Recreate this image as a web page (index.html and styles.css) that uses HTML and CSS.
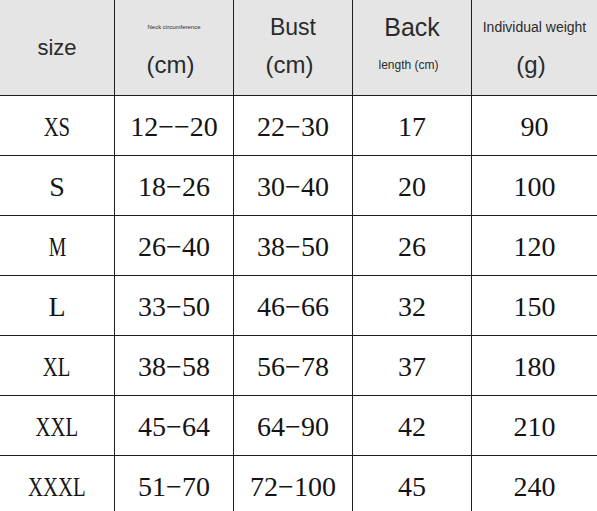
FILE: index.html
```html
<!DOCTYPE html>
<html>
<head>
<meta charset="utf-8">
<link rel="stylesheet" href="styles.css">
</head>
<body>
<div class="table">
  <div class="hcell single"><span class="h-size">size</span></div>
  <div class="hcell">
    <span class="l1 t-neck">Neck circumference</span>
    <span class="l2 t-cm">(cm)</span>
  </div>
  <div class="hcell">
    <span class="l1 t-bust">Bust</span>
    <span class="l2 t-cm">(cm)</span>
  </div>
  <div class="hcell">
    <span class="l1 t-back">Back</span>
    <span class="l2 t-len">length (cm)</span>
  </div>
  <div class="hcell">
    <span class="l1 t-ind">Individual weight</span>
    <span class="l2 t-g">(g)</span>
  </div>

  <div class="cell sz"><span class="nar">XS</span></div><div class="cell">12−−20</div><div class="cell">22−30</div><div class="cell">17</div><div class="cell">90</div>
  <div class="cell sz"><span>S</span></div><div class="cell">18−26</div><div class="cell">30−40</div><div class="cell">20</div><div class="cell">100</div>
  <div class="cell sz"><span class="nar-m">M</span></div><div class="cell">26−40</div><div class="cell">38−50</div><div class="cell">26</div><div class="cell">120</div>
  <div class="cell sz"><span>L</span></div><div class="cell">33−50</div><div class="cell">46−66</div><div class="cell">32</div><div class="cell">150</div>
  <div class="cell sz"><span class="nar">XL</span></div><div class="cell">38−58</div><div class="cell">56−78</div><div class="cell">37</div><div class="cell">180</div>
  <div class="cell sz"><span class="nar">XXL</span></div><div class="cell">45−64</div><div class="cell">64−90</div><div class="cell">42</div><div class="cell">210</div>
  <div class="cell sz"><span class="nar">XXXL</span></div><div class="cell">51−70</div><div class="cell">72−100</div><div class="cell">45</div><div class="cell">240</div>
</div>
</body>
</html>
```

FILE: styles.css
```css
html, body {
  margin: 0;
  padding: 0;
  overflow: hidden;
  background: #ffffff;
}

.table {
  display: grid;
  grid-template-columns: 114px 118px 118px 118px 1fr;
  grid-template-rows: 95px repeat(7, 59px);
  gap: 1px;
  background: #1e1e1e;
  width: 597px;
}

.hcell {
  background: #e5e5e5;
  display: flex;
  flex-direction: column;
  align-items: center;
  padding-top: 8px;
  font-family: "Liberation Sans", Arial, sans-serif;
  color: #2b2b2b;
}

.hcell.single {
  padding-top: 0;
  justify-content: center;
}

.h-size {
  font-size: 22px;
}

.l1, .l2 {
  display: block;
  height: 38px;
  line-height: 38px;
  white-space: nowrap;
}

.l2 {
  padding-right: 7px;
}

.t-neck { font-size: 6px; }
.t-bust { font-size: 23px; }
.t-back { font-size: 25px; }
.t-ind  { font-size: 14px; }
.t-cm   { font-size: 24px; }
.t-len  { font-size: 12px; }
.t-g    { font-size: 24px; }

.cell {
  background: #ffffff;
  display: flex;
  align-items: center;
  justify-content: center;
  font-family: "Liberation Serif", "Times New Roman", serif;
  font-size: 28px;
  color: #141414;
  padding-top: 2px;
  white-space: nowrap;
}

.sz span {
  display: inline-block;
}

.sz .nar {
  transform: scaleX(0.74);
}

.sz .nar-m {
  transform: scaleX(0.7);
}
```
